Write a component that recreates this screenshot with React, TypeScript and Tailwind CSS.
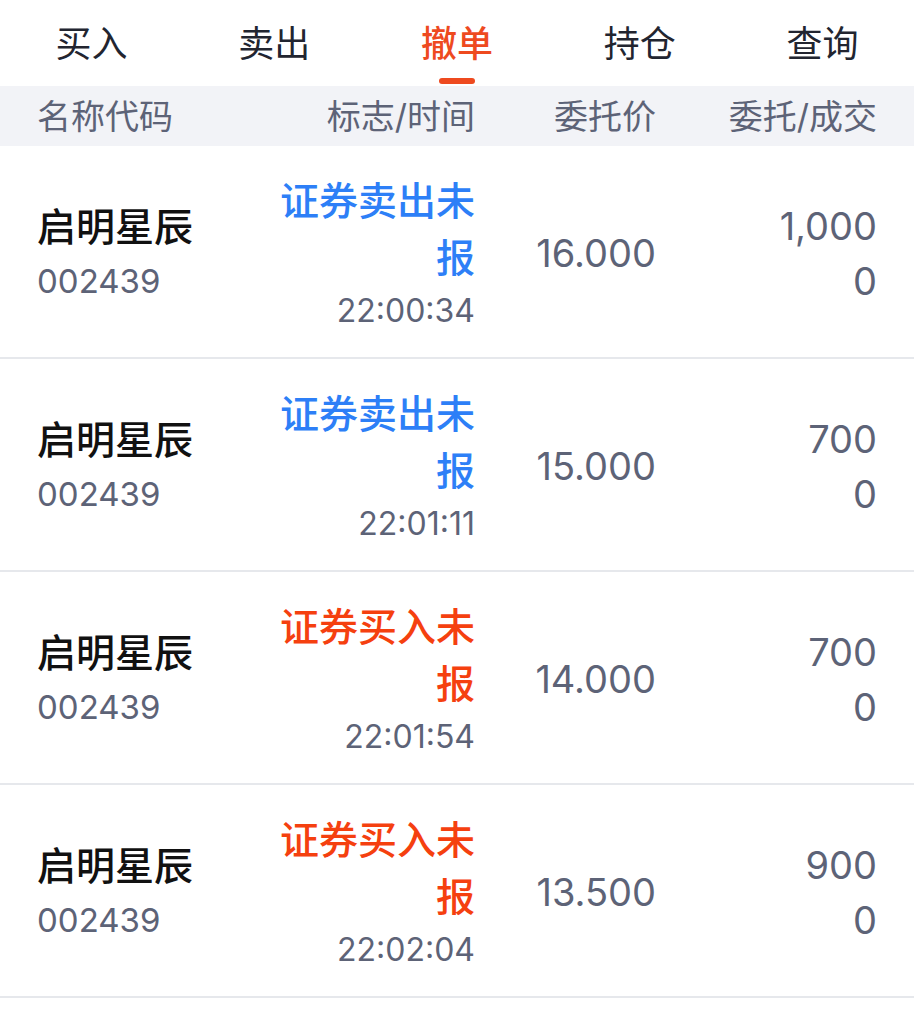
import React from "react";

const TABS = ["买入", "卖出", "撤单", "持仓", "查询"];

type Order = {
  name: string;
  code: string;
  flag: string;
  side: "buy" | "sell";
  time: string;
  price: string;
  qty: string;
  done: string;
};

const ORDERS: Order[] = [
  { name: "启明星辰", code: "002439", flag: "证券卖出未报", side: "sell", time: "22:00:34", price: "16.000", qty: "1,000", done: "0" },
  { name: "启明星辰", code: "002439", flag: "证券卖出未报", side: "sell", time: "22:01:11", price: "15.000", qty: "700", done: "0" },
  { name: "启明星辰", code: "002439", flag: "证券买入未报", side: "buy", time: "22:01:54", price: "14.000", qty: "700", done: "0" },
  { name: "启明星辰", code: "002439", flag: "证券买入未报", side: "buy", time: "22:02:04", price: "13.500", qty: "900", done: "0" },
];

const FONT = "font-['Inter','Noto_Sans_CJK_SC',sans-serif]";

function OrderRow({ order }: { order: Order }) {
  const flagColor = order.side === "sell" ? "text-[#2d7ff7]" : "text-[#f5400f]";
  return (
    <div className="grid h-[213px] grid-cols-[228px_210px_181px_221px] items-center border-b-2 border-[#e6e8ec] pl-[37px] pt-[4px]">
      {/* name + code */}
      <div className="flex flex-col">
        <span className="text-[39px] leading-[54px] font-medium text-[#111111]">{order.name}</span>
        <span className="text-[33px] leading-[54px] text-[#5d6377]">{order.code}</span>
      </div>
      {/* flag / time */}
      <div className="flex flex-col items-end text-right">
        <span className={`text-[39px] leading-[57px] font-medium ${flagColor}`}>{order.flag}</span>
        <span className="text-[32px] leading-[50px] text-[#5d6377]">{order.time}</span>
      </div>
      {/* price */}
      <div className="text-right text-[38px] text-[#5d6377]">{order.price}</div>
      {/* qty / done */}
      <div className="flex flex-col items-end text-[38px] leading-[55px] text-[#5d6377]">
        <span>{order.qty}</span>
        <span>{order.done}</span>
      </div>
    </div>
  );
}

export default function App() {
  const active = 2;
  return (
    <div className={`min-h-[1024px] w-[914px] bg-white ${FONT}`}>
      {/* Tabs */}
      <div className="grid h-[86px] grid-cols-5">
        {TABS.map((t, i) => (
          <div key={t} className="relative flex items-center justify-center pt-[2px]">
            <span
              className={
                i === active
                  ? "text-[36px] font-medium text-[#ee4a1f]"
                  : "text-[36px] text-[#222530]"
              }
            >
              {t}
            </span>
            {i === active && (
              <div className="absolute bottom-[2px] left-1/2 h-[6px] w-[36px] -translate-x-1/2 rounded-full bg-[#ee4a1f]" />
            )}
          </div>
        ))}
      </div>

      {/* Column header */}
      <div className="grid h-[60px] grid-cols-[228px_210px_181px_221px] items-center bg-[#f2f3f7] pl-[37px] text-[34px] text-[#5d6377]">
        <span>名称代码</span>
        <span className="text-right">标志/时间</span>
        <span className="text-right">委托价</span>
        <span className="text-right">委托/成交</span>
      </div>

      {ORDERS.map((o, i) => (
        <OrderRow key={i} order={o} />
      ))}
    </div>
  );
}
